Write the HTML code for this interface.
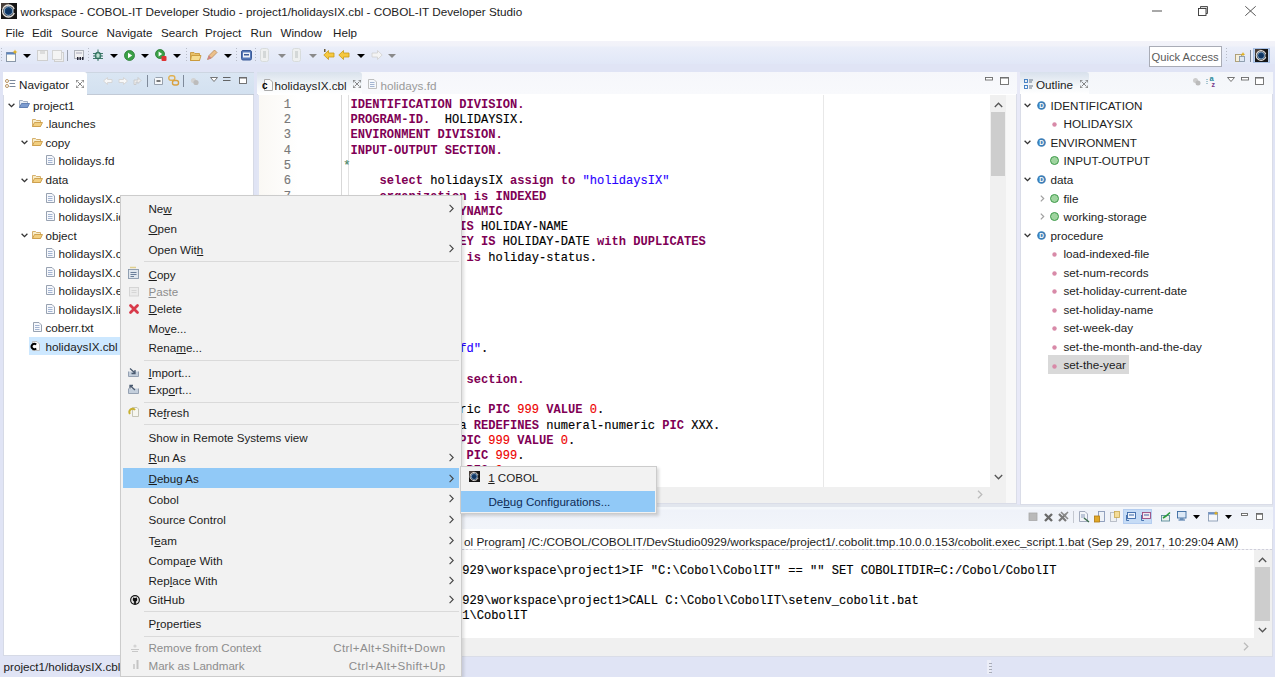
<!DOCTYPE html><html><head><meta charset="utf-8"><style>
*{margin:0;padding:0;box-sizing:border-box}
html,body{width:1275px;height:677px;overflow:hidden;background:#e0e4f5;position:relative;font-family:"Liberation Sans",sans-serif}
.t{position:absolute;white-space:pre;line-height:14px;font-family:"Liberation Sans",sans-serif}
.r{position:absolute}
.m{font-family:"Liberation Mono",monospace;font-size:12.08px;line-height:15px;position:absolute;white-space:pre;-webkit-text-stroke:0.15px currentColor}
.k{-webkit-text-stroke:0}
.k{color:#7f0055;font-weight:bold}
.s{color:#2a00ff}
.n{color:#e00}
u{text-decoration:underline;text-underline-offset:1px}
svg{position:absolute;overflow:visible}
</style></head><body>
<div class="r" style="left:0px;top:0px;width:1275px;height:24px;background:#fff"></div>
<svg style="left:1px;top:3px" width="16" height="16" viewBox="0 0 16 16"><rect x="0" y="0" width="16" height="16" fill="#151515"/><rect x="0" y="0" width="8" height="6" fill="#6a5a50" opacity="0.6"/><circle cx="7.5" cy="8" r="6" fill="none" stroke="#e8e4e0" stroke-width="1.3"/><circle cx="7.5" cy="8" r="4.4" fill="#16406e" stroke="#bcd8f0" stroke-width="0.9"/><circle cx="7.5" cy="8.6" r="2.6" fill="#0f3460"/><rect x="13" y="6" width="3" height="4" fill="#151515"/></svg>
<div class="t " style="left:20.5px;top:4.63px;color:#1c1c1c;font-size:11.74px;">workspace - COBOL-IT Developer Studio - project1/holidaysIX.cbl - COBOL-IT Developer Studio</div>
<div class="r" style="left:1152px;top:10px;width:10px;height:2px;background:#a8a8a8"></div>
<svg style="left:1198px;top:6px" width="11" height="10" viewBox="0 0 11 10"><path d="M2.5 2V0.5H9.5V7.5H8" fill="#d8d8d8" stroke="#444" stroke-width="0.9"/><rect x="0.5" y="2.5" width="7.5" height="7" fill="#fff" stroke="#333" stroke-width="0.9"/></svg>
<svg style="left:1245px;top:6px" width="11" height="10" viewBox="0 0 11 10"><path d="M0.3 0.3L10.7 9.7M10.7 0.3L0.3 9.7" stroke="#444" stroke-width="0.9"/></svg>
<div class="r" style="left:0px;top:24px;width:1275px;height:17px;background:#fff"></div>
<div class="t " style="left:5.5px;top:26.16px;color:#1c1c1c;font-size:11.65px;">File</div>
<div class="t " style="left:32px;top:26.16px;color:#1c1c1c;font-size:11.65px;">Edit</div>
<div class="t " style="left:61px;top:26.16px;color:#1c1c1c;font-size:11.65px;">Source</div>
<div class="t " style="left:106.5px;top:26.16px;color:#1c1c1c;font-size:11.65px;">Navigate</div>
<div class="t " style="left:161px;top:26.16px;color:#1c1c1c;font-size:11.65px;">Search</div>
<div class="t " style="left:205px;top:26.16px;color:#1c1c1c;font-size:11.65px;">Project</div>
<div class="t " style="left:250.5px;top:26.16px;color:#1c1c1c;font-size:11.65px;">Run</div>
<div class="t " style="left:280.5px;top:26.16px;color:#1c1c1c;font-size:11.65px;">Window</div>
<div class="t " style="left:333px;top:26.16px;color:#1c1c1c;font-size:11.65px;">Help</div>
<div class="r" style="left:0px;top:41px;width:1275px;height:23px;background:linear-gradient(#f3f3f9 0,#f1f2f9 5px,#eaeef9 6px,#e1e7f7)"></div>
<div class="r" style="left:1px;top:48px;width:1px;height:13px;background:repeating-linear-gradient(#b8bcc8 0 1px,transparent 1px 3px)"></div>
<svg style="left:5px;top:49px" width="14" height="14" viewBox="0 0 14 14"><rect x="1.5" y="3.5" width="9" height="9" fill="#fdfdf8" stroke="#8a97a8"/><rect x="1.5" y="3.5" width="9" height="2" fill="#5a84c0"/><path d="M10 0.5L10.8 2.2L12.5 3L10.8 3.8L10 5.5L9.2 3.8L7.5 3L9.2 2.2Z" fill="#e0b020"/></svg>
<svg style="left:23px;top:54px" width="8" height="4" viewBox="0 0 8 4"><path d="M0 0H8L4 4Z" fill="#000"/></svg>
<svg style="left:36px;top:49px" width="13" height="13" viewBox="0 0 13 13"><rect x="1.5" y="1.5" width="10" height="10" fill="#f2f2f2" stroke="#cfcfcf"/><rect x="4" y="2" width="5" height="3" fill="#dcdcdc"/></svg>
<svg style="left:51px;top:49px" width="14" height="14" viewBox="0 0 14 14"><rect x="3.5" y="3.5" width="9" height="9" fill="#efefef" stroke="#cfcfcf"/><rect x="1.5" y="1.5" width="9" height="9" fill="#f4f4f4" stroke="#d4d4d4"/></svg>
<div class="r" style="left:67px;top:50px;width:1px;height:11px;background:#9aa0ad"></div>
<svg style="left:73px;top:49px" width="12" height="12" viewBox="0 0 12 12"><rect x="1.5" y="1.5" width="9" height="8" fill="#f0f0f2" stroke="#b0b4bc"/><path d="M3 4H9" stroke="#aab"/><rect x="4" y="8" width="1.5" height="3" fill="#223"/><rect x="6.5" y="8" width="1.5" height="3" fill="#223"/><rect x="9" y="8" width="1.5" height="3" fill="#223"/></svg>
<div class="r" style="left:88px;top:48px;width:1px;height:13px;background:repeating-linear-gradient(#b8bcc8 0 1px,transparent 1px 3px)"></div>
<svg style="left:92px;top:49px" width="12" height="12" viewBox="0 0 12 12"><ellipse cx="6" cy="6.5" rx="3" ry="3.5" fill="#5a9a86" stroke="#2f6e5c" stroke-width="0.8"/><path d="M1 4.5H11M1 7H11M1 9.5H11M6 0.5V12" stroke="#2f6e5c" stroke-width="0.9"/><ellipse cx="6" cy="6.5" rx="1.6" ry="2.2" fill="#bfe0d2"/></svg>
<svg style="left:110px;top:54px" width="8" height="4" viewBox="0 0 8 4"><path d="M0 0H8L4 4Z" fill="#000"/></svg>
<svg style="left:124px;top:50px" width="11" height="11" viewBox="0 0 11 11"><circle cx="5.5" cy="5.5" r="5" fill="#3aa047" stroke="#267a30" stroke-width="0.8"/><path d="M4 2.8L8.2 5.5L4 8.2Z" fill="#fff"/></svg>
<svg style="left:141px;top:54px" width="8" height="4" viewBox="0 0 8 4"><path d="M0 0H8L4 4Z" fill="#000"/></svg>
<svg style="left:155px;top:49px" width="12" height="12" viewBox="0 0 12 12"><circle cx="5" cy="5" r="4.5" fill="#3aa047" stroke="#267a30" stroke-width="0.8"/><path d="M3.6 2.6L7.2 5L3.6 7.4Z" fill="#fff"/><rect x="6.5" y="7" width="5" height="5" rx="1" fill="#d33"/></svg>
<svg style="left:173px;top:54px" width="8" height="4" viewBox="0 0 8 4"><path d="M0 0H8L4 4Z" fill="#000"/></svg>
<div class="r" style="left:186px;top:48px;width:1px;height:13px;background:repeating-linear-gradient(#b8bcc8 0 1px,transparent 1px 3px)"></div>
<svg style="left:190px;top:50px" width="12" height="12" viewBox="0 0 12 12"><path d="M0.5 2.5H4L5 3.5H9.5V10.5H0.5Z" fill="#e8c068" stroke="#c49030" stroke-width="0.8"/><path d="M1.5 5.5H11L9.5 10.5H0.5Z" fill="#f6dc90" stroke="#c49030" stroke-width="0.8"/></svg>
<svg style="left:206px;top:49px" width="12" height="12" viewBox="0 0 12 12"><path d="M1.5 10.5L3 6.5L8.5 1L11 3.5L5.5 9Z" fill="#ecc08a" stroke="#b88a58" stroke-width="0.8"/><path d="M1.5 10.5L3 6.5L5.5 9Z" fill="#d0808a"/></svg>
<svg style="left:224px;top:54px" width="8" height="4" viewBox="0 0 8 4"><path d="M0 0H8L4 4Z" fill="#000"/></svg>
<div class="r" style="left:236px;top:48px;width:1px;height:13px;background:repeating-linear-gradient(#b8bcc8 0 1px,transparent 1px 3px)"></div>
<svg style="left:241px;top:50px" width="11" height="11" viewBox="0 0 11 11"><rect x="0.5" y="0.5" width="10" height="9.5" rx="1.5" fill="#5478b8" stroke="#3a5a98"/><rect x="2" y="2.5" width="7" height="5" fill="#eef2f8"/><rect x="3" y="4" width="5" height="1.5" fill="#3a5a98"/></svg>
<div class="r" style="left:255px;top:48px;width:1px;height:13px;background:repeating-linear-gradient(#b8bcc8 0 1px,transparent 1px 3px)"></div>
<svg style="left:258px;top:48px" width="13" height="14" viewBox="0 0 13 14"><rect x="2.5" y="0.5" width="8" height="13" rx="2" fill="#eef0f0" stroke="#d8dcdc"/><rect x="5" y="3" width="3" height="7" fill="#d4d8d8"/></svg>
<svg style="left:278px;top:54px" width="8" height="4" viewBox="0 0 8 4"><path d="M0 0H8L4 4Z" fill="#8a8a8a"/></svg>
<svg style="left:290px;top:48px" width="13" height="14" viewBox="0 0 13 14"><rect x="2.5" y="0.5" width="8" height="13" rx="2" fill="#eef0f0" stroke="#d8dcdc"/><rect x="5" y="3" width="3" height="7" fill="#d4d8d8"/></svg>
<svg style="left:309px;top:54px" width="8" height="4" viewBox="0 0 8 4"><path d="M0 0H8L4 4Z" fill="#8a8a8a"/></svg>
<svg style="left:323px;top:49px" width="12" height="12" viewBox="0 0 12 12"><path d="M0.8 6L5.5 1.5V4H11V8H5.5V10.5Z" fill="#f6c840" stroke="#c89a18" stroke-width="0.8"/><rect x="1" y="0" width="1.5" height="3" fill="#6a5a3a"/></svg>
<svg style="left:338px;top:49px" width="12" height="12" viewBox="0 0 12 12"><path d="M0.8 6L5.5 1.5V4H11V8H5.5V10.5Z" fill="#f6c840" stroke="#c89a18" stroke-width="0.8"/></svg>
<svg style="left:357px;top:54px" width="8" height="4" viewBox="0 0 8 4"><path d="M0 0H8L4 4Z" fill="#000"/></svg>
<svg style="left:371px;top:49px" width="12" height="12" viewBox="0 0 12 12"><path d="M11.2 6L6.5 1.5V4H1V8H6.5V10.5Z" fill="#f4f4f4" stroke="#d0d0d0" stroke-width="0.8"/></svg>
<svg style="left:388px;top:54px" width="8" height="4" viewBox="0 0 8 4"><path d="M0 0H8L4 4Z" fill="#8a8a8a"/></svg>
<div class="r" style="left:1149px;top:46px;width:73px;height:21px;background:#fff;border:1px solid #a9acb6"></div>
<div class="t " style="left:1151.5px;top:50.12px;color:#5a5a5a;font-size:11.2px;">Quick Access</div>
<div class="r" style="left:1226px;top:48px;width:1px;height:13px;background:repeating-linear-gradient(#b8bcc8 0 1px,transparent 1px 3px)"></div>
<svg style="left:1235px;top:52px" width="11" height="10" viewBox="0 0 11 10"><rect x="0.5" y="2.5" width="6" height="7" fill="#f6f0dc" stroke="#a99a70" stroke-width="0.9"/><rect x="4.5" y="4.5" width="5" height="5" fill="#dfe8f4" stroke="#8899aa" stroke-width="0.9"/><path d="M8 0L8.7 1.5L10.2 2.2L8.7 2.9L8 4.4L7.3 2.9L5.8 2.2L7.3 1.5Z" fill="#e0b020"/></svg>
<div class="r" style="left:1250px;top:50px;width:1px;height:12px;background:#7a8494"></div>
<div class="r" style="left:1253px;top:48px;width:17px;height:15px;background:#bcd0ec;border:1px solid #a8c0e4"></div>
<svg style="left:1255px;top:49px" width="13" height="13" viewBox="0 0 16 16"><rect x="0" y="0" width="16" height="16" fill="#151515"/><rect x="0" y="0" width="8" height="6" fill="#6a5a50" opacity="0.6"/><circle cx="7.5" cy="8" r="6" fill="none" stroke="#e8e4e0" stroke-width="1.3"/><circle cx="7.5" cy="8" r="4.4" fill="#16406e" stroke="#bcd8f0" stroke-width="0.9"/><circle cx="7.5" cy="8.6" r="2.6" fill="#0f3460"/><rect x="13" y="6" width="3" height="4" fill="#151515"/></svg>
<div class="r" style="left:3px;top:72px;width:251px;height:584px;background:#fff;border:1px solid #d6dae6;border-top:none"></div>
<div class="r" style="left:3px;top:72px;width:251px;height:23px;background:linear-gradient(#dae6f3,#d3e1f0);border-top:1px solid #cdd6e2;border-bottom:1px solid #c2cad6"></div>
<div class="r" style="left:3px;top:72px;width:84px;height:23px;background:#fff;border-top-right-radius:3px"></div>
<svg style="left:5px;top:79px" width="11" height="9" viewBox="0 0 11 9"><circle cx="2" cy="2" r="1.5" fill="none" stroke="#b08850" stroke-width="0.9"/><circle cx="2" cy="7" r="1.5" fill="none" stroke="#b08850" stroke-width="0.9"/><path d="M4.5 1.5H10.5M4.5 4.5H10M4.5 7.5H10.5" stroke="#6b7a90" stroke-width="0.9"/></svg>
<div class="t " style="left:19px;top:78.45px;color:#1c1c1c;font-size:11.7px;">Navigator</div>
<svg style="left:76px;top:80px" width="8" height="8" viewBox="0 0 8 8"><path d="M1.5 1.5L6.5 6.5M6.5 1.5L1.5 6.5" stroke="#6a6a6a" stroke-width="0.8"/><path d="M0.5 0V2.5M0 0.5H2.5M7.5 0V2.5M8 0.5H5.5M0.5 8V5.5M0 7.5H2.5M7.5 8V5.5M8 7.5H5.5" stroke="#6a6a6a" stroke-width="0.8" opacity="0.8"/></svg>
<svg style="left:103px;top:77px" width="10" height="8" viewBox="0 0 10 8"><path d="M0.5 4L4.5 0.5V2.5H9V5.5H4.5V7.5Z" fill="#f8f8f8" stroke="#d4d4d4" stroke-width="0.9"/></svg>
<svg style="left:118px;top:77px" width="10" height="8" viewBox="0 0 10 8"><path d="M9.5 4L5.5 0.5V2.5H1V5.5H5.5V7.5Z" fill="#f8f8f8" stroke="#d4d4d4" stroke-width="0.9"/></svg>
<svg style="left:133px;top:76px" width="9" height="9" viewBox="0 0 9 9"><path d="M1 8.5V4H5V1.5L8 4.5L5 7.5V6H3V8.5Z" fill="#eeeeee" stroke="#c8c8c8" stroke-width="0.9"/></svg>
<div class="r" style="left:147px;top:75px;width:1px;height:12px;background:#7f8a9a"></div>
<svg style="left:154px;top:77px" width="9" height="8" viewBox="0 0 9 8"><path d="M1.5 0.5H8.5V7.5H0.5V1.5" fill="#f6f8fa" stroke="#8d97a5" stroke-width="0.9"/><path d="M2.5 4H6.5" stroke="#222" stroke-width="1.2"/></svg>
<svg style="left:168px;top:75px" width="11" height="11" viewBox="0 0 11 11"><rect x="0.8" y="0.8" width="6" height="4.5" rx="2" fill="none" stroke="#e0b050" stroke-width="1.4"/><rect x="4.5" y="5.5" width="6" height="4.5" rx="2" fill="none" stroke="#d8a040" stroke-width="1.4"/></svg>
<div class="r" style="left:183px;top:75px;width:1px;height:12px;background:#7f8a9a"></div>
<svg style="left:190px;top:77px" width="9" height="9" viewBox="0 0 9 9"><circle cx="3.5" cy="3.5" r="2.6" fill="#d2d2d2"/><circle cx="6" cy="5.5" r="2.6" fill="#bcbcbc"/></svg>
<svg style="left:210px;top:77px" width="8" height="5" viewBox="0 0 8 5"><path d="M0.5 0.5H7.5L4 4.5Z" fill="#fff" stroke="#666" stroke-width="0.9"/></svg>
<svg style="left:223px;top:77px" width="8" height="4" viewBox="0 0 8 4"><path d="M0 0.5H7.5M0 3.5H7.5" stroke="#555" stroke-width="0.9"/></svg>
<svg style="left:239px;top:77px" width="8" height="7" viewBox="0 0 8 7"><rect x="0.5" y="0.5" width="7" height="6" fill="#fff" stroke="#666" stroke-width="0.9"/><rect x="0.5" y="0.5" width="7" height="1" fill="#666"/></svg>
<div class="r" style="left:29px;top:337px;width:95px;height:18px;background:#cde8ff"></div>
<svg style="left:8px;top:103.3px" width="7" height="5" viewBox="0 0 7 5"><path d="M0.6 0.8L3.5 3.7L6.4 0.8" fill="none" stroke="#333" stroke-width="1.3"/></svg>
<svg style="left:19px;top:100.3px" width="11" height="8" viewBox="0 0 11 8"><path d="M0.5 0.5H3.5L4.5 1.5H8.5V7.5H0.5Z" fill="#e6ecf4" stroke="#9aa8bc" stroke-width="0.9"/><path d="M2.5 3.5H10.5L8.5 7.5H0.5Z" fill="#7c9cd0" stroke="#5a7ab0" stroke-width="0.9"/></svg>
<div class="t " style="left:33px;top:98.75px;color:#1c1c1c;font-size:11.7px;">project1</div>
<svg style="left:31.5px;top:119.35px" width="11" height="8" viewBox="0 0 11 8"><path d="M0.5 0.5H3.5L4.5 1.5H8.5V7.5H0.5Z" fill="#f8ecc8" stroke="#d0a860" stroke-width="0.9"/><path d="M2.5 3.5H10.5L8.5 7.5H0.5Z" fill="#f2cf80" stroke="#cc9c48" stroke-width="0.9"/></svg>
<div class="t " style="left:45.5px;top:117.30px;color:#1c1c1c;font-size:11.7px;">.launches</div>
<svg style="left:21px;top:140.4px" width="7" height="5" viewBox="0 0 7 5"><path d="M0.6 0.8L3.5 3.7L6.4 0.8" fill="none" stroke="#333" stroke-width="1.3"/></svg>
<svg style="left:31.5px;top:137.9px" width="11" height="8" viewBox="0 0 11 8"><path d="M0.5 0.5H3.5L4.5 1.5H8.5V7.5H0.5Z" fill="#f8ecc8" stroke="#d0a860" stroke-width="0.9"/><path d="M2.5 3.5H10.5L8.5 7.5H0.5Z" fill="#f2cf80" stroke="#cc9c48" stroke-width="0.9"/></svg>
<div class="t " style="left:45.5px;top:135.85px;color:#1c1c1c;font-size:11.7px;">copy</div>
<svg style="left:46px;top:155.45px" width="9" height="10" viewBox="0 0 9 10"><path d="M0.5 0.5H6L8.5 3V9.5H0.5Z" fill="#f6f8fc" stroke="#8c97a8" stroke-width="0.9"/><path d="M2 3.5H6.5M2 5.5H6.5M2 7.5H6.5" stroke="#9aabcc" stroke-width="0.9"/></svg>
<div class="t " style="left:58.5px;top:154.40px;color:#1c1c1c;font-size:11.7px;">holidays.fd</div>
<svg style="left:21px;top:177.5px" width="7" height="5" viewBox="0 0 7 5"><path d="M0.6 0.8L3.5 3.7L6.4 0.8" fill="none" stroke="#333" stroke-width="1.3"/></svg>
<svg style="left:31.5px;top:175.0px" width="11" height="8" viewBox="0 0 11 8"><path d="M0.5 0.5H3.5L4.5 1.5H8.5V7.5H0.5Z" fill="#f8ecc8" stroke="#d0a860" stroke-width="0.9"/><path d="M2.5 3.5H10.5L8.5 7.5H0.5Z" fill="#f2cf80" stroke="#cc9c48" stroke-width="0.9"/></svg>
<div class="t " style="left:45.5px;top:172.95px;color:#1c1c1c;font-size:11.7px;">data</div>
<svg style="left:46px;top:192.55px" width="9" height="10" viewBox="0 0 9 10"><path d="M0.5 0.5H6L8.5 3V9.5H0.5Z" fill="#f6f8fc" stroke="#8c97a8" stroke-width="0.9"/><path d="M2 3.5H6.5M2 5.5H6.5M2 7.5H6.5" stroke="#9aabcc" stroke-width="0.9"/></svg>
<div class="t " style="left:58.5px;top:191.50px;color:#1c1c1c;font-size:11.7px;">holidaysIX.dat</div>
<svg style="left:46px;top:211.10000000000002px" width="9" height="10" viewBox="0 0 9 10"><path d="M0.5 0.5H6L8.5 3V9.5H0.5Z" fill="#f6f8fc" stroke="#8c97a8" stroke-width="0.9"/><path d="M2 3.5H6.5M2 5.5H6.5M2 7.5H6.5" stroke="#9aabcc" stroke-width="0.9"/></svg>
<div class="t " style="left:58.5px;top:210.05px;color:#1c1c1c;font-size:11.7px;">holidaysIX.idx</div>
<svg style="left:21px;top:233.14999999999998px" width="7" height="5" viewBox="0 0 7 5"><path d="M0.6 0.8L3.5 3.7L6.4 0.8" fill="none" stroke="#333" stroke-width="1.3"/></svg>
<svg style="left:31.5px;top:230.64999999999998px" width="11" height="8" viewBox="0 0 11 8"><path d="M0.5 0.5H3.5L4.5 1.5H8.5V7.5H0.5Z" fill="#f8ecc8" stroke="#d0a860" stroke-width="0.9"/><path d="M2.5 3.5H10.5L8.5 7.5H0.5Z" fill="#f2cf80" stroke="#cc9c48" stroke-width="0.9"/></svg>
<div class="t " style="left:45.5px;top:228.60px;color:#1c1c1c;font-size:11.7px;">object</div>
<svg style="left:46px;top:248.2px" width="9" height="10" viewBox="0 0 9 10"><path d="M0.5 0.5H6L8.5 3V9.5H0.5Z" fill="#f6f8fc" stroke="#8c97a8" stroke-width="0.9"/><path d="M2 3.5H6.5M2 5.5H6.5M2 7.5H6.5" stroke="#9aabcc" stroke-width="0.9"/></svg>
<div class="t " style="left:58.5px;top:247.15px;color:#1c1c1c;font-size:11.7px;">holidaysIX.c1</div>
<svg style="left:46px;top:266.75px" width="9" height="10" viewBox="0 0 9 10"><path d="M0.5 0.5H6L8.5 3V9.5H0.5Z" fill="#f6f8fc" stroke="#8c97a8" stroke-width="0.9"/><path d="M2 3.5H6.5M2 5.5H6.5M2 7.5H6.5" stroke="#9aabcc" stroke-width="0.9"/></svg>
<div class="t " style="left:58.5px;top:265.70px;color:#1c1c1c;font-size:11.7px;">holidaysIX.c2</div>
<svg style="left:46px;top:285.3px" width="9" height="10" viewBox="0 0 9 10"><path d="M0.5 0.5H6L8.5 3V9.5H0.5Z" fill="#f6f8fc" stroke="#8c97a8" stroke-width="0.9"/><path d="M2 3.5H6.5M2 5.5H6.5M2 7.5H6.5" stroke="#9aabcc" stroke-width="0.9"/></svg>
<div class="t " style="left:58.5px;top:284.25px;color:#1c1c1c;font-size:11.7px;">holidaysIX.exe</div>
<svg style="left:46px;top:303.85px" width="9" height="10" viewBox="0 0 9 10"><path d="M0.5 0.5H6L8.5 3V9.5H0.5Z" fill="#f6f8fc" stroke="#8c97a8" stroke-width="0.9"/><path d="M2 3.5H6.5M2 5.5H6.5M2 7.5H6.5" stroke="#9aabcc" stroke-width="0.9"/></svg>
<div class="t " style="left:58.5px;top:302.80px;color:#1c1c1c;font-size:11.7px;">holidaysIX.lis</div>
<svg style="left:33px;top:322.40000000000003px" width="9" height="10" viewBox="0 0 9 10"><path d="M0.5 0.5H6L8.5 3V9.5H0.5Z" fill="#f6f8fc" stroke="#8c97a8" stroke-width="0.9"/><path d="M2 3.5H6.5M2 5.5H6.5M2 7.5H6.5" stroke="#9aabcc" stroke-width="0.9"/></svg>
<div class="t " style="left:45.5px;top:321.35px;color:#1c1c1c;font-size:11.7px;">coberr.txt</div>
<svg style="left:30px;top:340.95px" width="10" height="10" viewBox="0 0 10 10"><path d="M2.5 0.5H7L9.5 3V9.5H2.5Z" fill="#fbfbfb" stroke="#b8b8b8" stroke-width="0.9"/><path d="M6.2 3.6A2.8 2.6 0 1 0 6.2 7.4" fill="none" stroke="#000" stroke-width="2"/></svg>
<div class="t " style="left:45.5px;top:339.90px;color:#1c1c1c;font-size:11.7px;">holidaysIX.cbl</div>
<div class="r" style="left:257px;top:72px;width:760px;height:432px;background:#fff;border:1px solid #dadde8;border-top:none"></div>
<div class="r" style="left:257px;top:72px;width:760px;height:22px;background:linear-gradient(#f6f7fb,#f8f9fc)"></div>
<div class="r" style="left:257px;top:72px;width:105px;height:22px;background:linear-gradient(#d9e2ec,#f4f7fa 65%,#fff);border-top-right-radius:3px"></div>
<svg style="left:262px;top:79px" width="12" height="12" viewBox="0 0 12 12"><path d="M2.5 0.5H8L10.5 3V11.5H2.5Z" fill="#fbfbfb" stroke="#aaa"/><text x="0" y="10" font-family="Liberation Sans" font-weight="bold" font-size="10" fill="#000">c</text></svg>
<div class="t " style="left:274.5px;top:78.95px;color:#1c1c1c;font-size:11.7px;">holidaysIX.cbl</div>
<svg style="left:353px;top:80px" width="8" height="8" viewBox="0 0 8 8"><path d="M1.5 1.5L6.5 6.5M6.5 1.5L1.5 6.5" stroke="#6a6a6a" stroke-width="0.8"/><path d="M0.5 0V2.5M0 0.5H2.5M7.5 0V2.5M8 0.5H5.5M0.5 8V5.5M0 7.5H2.5M7.5 8V5.5M8 7.5H5.5" stroke="#6a6a6a" stroke-width="0.8" opacity="0.8"/></svg>
<svg style="left:368px;top:79px" width="9" height="10" viewBox="0 0 9 10"><path d="M0.5 0.5H6L8.5 3V9.5H0.5Z" fill="#f6f8fc" stroke="#b8b8b8" stroke-width="0.9"/><path d="M2 3.5H6.5M2 5.5H6.5M2 7.5H6.5" stroke="#9aabcc" stroke-width="0.9"/></svg>
<div class="t " style="left:380.5px;top:78.95px;color:#9a9a9a;font-size:11.7px;">holidays.fd</div>
<svg style="left:985px;top:77px" width="8" height="4" viewBox="0 0 8 4"><rect x="0.5" y="0.5" width="7" height="2.5" fill="#fff" stroke="#6a6a6a" stroke-width="0.9"/></svg>
<svg style="left:1000px;top:77px" width="9" height="8" viewBox="0 0 9 8"><rect x="0.5" y="0.5" width="8" height="7" fill="#fff" stroke="#6a6a6a" stroke-width="0.9"/><rect x="0.5" y="0.5" width="8" height="1" fill="#6a6a6a"/></svg>
<div class="r" style="left:258px;top:95px;width:40px;height:392px;background:linear-gradient(90deg,#faf8f4,#fdfcfa 60%,#fff)"></div>
<div class="r" style="left:257px;top:95px;width:2px;height:392px;background:#e2e6f4"></div>
<div class="r" style="left:341px;top:95px;width:1px;height:392px;background:#d8d8d8"></div>
<div class="r" style="left:348px;top:95px;width:1px;height:392px;background:#e2e2e2"></div>
<div class="r" style="left:823px;top:95px;width:1px;height:392px;background:#e8e8e8"></div>
<div class="m" style="left:270px;top:97.90px;width:21px;text-align:right;color:#787878">1</div>
<div class="m" style="left:270px;top:113.17px;width:21px;text-align:right;color:#787878">2</div>
<div class="m" style="left:270px;top:128.44px;width:21px;text-align:right;color:#787878">3</div>
<div class="m" style="left:270px;top:143.71px;width:21px;text-align:right;color:#787878">4</div>
<div class="m" style="left:270px;top:158.98px;width:21px;text-align:right;color:#787878">5</div>
<div class="m" style="left:270px;top:174.25px;width:21px;text-align:right;color:#787878">6</div>
<div class="m" style="left:270px;top:189.52px;width:21px;text-align:right;color:#787878">7</div>
<div class="m" style="left:350.6px;top:97.90px;color:#000"><span class="k">IDENTIFICATION DIVISION.</span></div>
<div class="m" style="left:350.6px;top:113.17px;color:#000"><span class="k">PROGRAM-ID.</span>  HOLIDAYSIX.</div>
<div class="m" style="left:350.6px;top:128.44px;color:#000"><span class="k">ENVIRONMENT DIVISION.</span></div>
<div class="m" style="left:350.6px;top:143.71px;color:#000"><span class="k">INPUT-OUTPUT SECTION.</span></div>
<div class="m" style="left:350.6px;top:174.25px;color:#000">    <span class="k">select</span> holidaysIX <span class="k">assign to</span> <span class="s">"holidaysIX"</span></div>
<div class="m" style="left:350.6px;top:189.52px;color:#000">    <span class="k">organization is INDEXED</span></div>
<div class="m" style="left:350.6px;top:204.79px;color:#000">    <span class="k">access is DYNAMIC</span></div>
<div class="m" style="left:350.6px;top:220.06px;color:#000">    <span class="k">record key IS</span> HOLIDAY-NAME</div>
<div class="m" style="left:350.6px;top:235.33px;color:#000">    <span class="k">alternate KEY IS</span> HOLIDAY-DATE <span class="k">with DUPLICATES</span></div>
<div class="m" style="left:350.6px;top:250.60px;color:#000">    <span class="k">file status is</span> holiday-status.</div>
<div class="m" style="left:350.6px;top:342.22px;color:#000">    <span class="k">copy</span> <span class="s">"holy.fd"</span>.</div>
<div class="m" style="left:350.6px;top:372.76px;color:#000">    <span class="k">working-sto section.</span></div>
<div class="m" style="left:350.6px;top:403.30px;color:#000">    01 numeral-ric <span class="k">PIC</span> <span class="n">999</span> <span class="k">VALUE</span> <span class="n">0</span>.</div>
<div class="m" style="left:350.6px;top:418.57px;color:#000">    01 numeral-a <span class="k">REDEFINES</span> numeral-numeric <span class="k">PIC</span> XXX.</div>
<div class="m" style="left:350.6px;top:433.84px;color:#000">    01 numeral-<span class="k">PIC</span> <span class="n">999</span> <span class="k">VALUE</span> <span class="n">0</span>.</div>
<div class="m" style="left:350.6px;top:449.11px;color:#000">    01 numeral- <span class="k">PIC</span> <span class="n">999</span>.</div>
<div class="m" style="left:350.6px;top:464.38px;color:#000">    01 numeral- <span class="k">PIC</span> <span class="n">9</span>.</div>
<div class="m" style="left:343.35px;top:158.98px;color:#3f7f5f">*</div>
<div class="r" style="left:990px;top:95px;width:16px;height:392px;background:#f0f0f0"></div>
<svg style="left:994px;top:102px" width="9" height="6" viewBox="0 0 9 6"><path d="M0.8 5L4.5 1.2L8.2 5" fill="none" stroke="#555" stroke-width="1.3"/></svg>
<div class="r" style="left:991px;top:112px;width:14px;height:64px;background:#cdcdcd"></div>
<svg style="left:994px;top:474px" width="9" height="6" viewBox="0 0 9 6"><path d="M0.8 1L4.5 4.8L8.2 1" fill="none" stroke="#555" stroke-width="1.3"/></svg>
<div class="r" style="left:258px;top:487px;width:748px;height:16px;background:#f0f0f0"></div>
<svg style="left:977px;top:490px" width="6" height="9" viewBox="0 0 6 9"><path d="M1 0.8L4.8 4.5L1 8.2" fill="none" stroke="#bbb" stroke-width="1.3"/></svg>
<div class="r" style="left:1006px;top:95px;width:10px;height:408px;background:#f8f8f8"></div>
<div class="r" style="left:1017px;top:72px;width:3px;height:432px;background:#e8e9f7"></div>
<div class="r" style="left:1020px;top:72px;width:253px;height:433px;background:#fff;border:1px solid #dadde8;border-top:none"></div>
<div class="r" style="left:1020px;top:72px;width:253px;height:22px;background:linear-gradient(#f4f6fa,#f6f8fb)"></div>
<div class="r" style="left:1020px;top:72px;width:69px;height:22px;background:linear-gradient(#d8e1ec,#f4f7fa 65%,#fff);border-top-right-radius:3px"></div>
<svg style="left:1024px;top:79px" width="9" height="10" viewBox="0 0 9 10"><rect x="0.5" y="0.5" width="3" height="3" fill="none" stroke="#3a7ac0" stroke-width="0.9"/><rect x="0.5" y="6.5" width="3" height="3" fill="none" stroke="#3a7ac0" stroke-width="0.9"/><path d="M5 1H9M5 3H8M5 7H9M5 9H8" stroke="#5a6a7a" stroke-width="0.9"/></svg>
<div class="t " style="left:1036px;top:78.45px;color:#1c1c1c;font-size:11.7px;">Outline</div>
<svg style="left:1080px;top:80px" width="8" height="8" viewBox="0 0 8 8"><path d="M1.5 1.5L6.5 6.5M6.5 1.5L1.5 6.5" stroke="#6a6a6a" stroke-width="0.8"/><path d="M0.5 0V2.5M0 0.5H2.5M7.5 0V2.5M8 0.5H5.5M0.5 8V5.5M0 7.5H2.5M7.5 8V5.5M8 7.5H5.5" stroke="#6a6a6a" stroke-width="0.8" opacity="0.8"/></svg>
<svg style="left:1192px;top:77px" width="9" height="9" viewBox="0 0 9 9"><circle cx="3.5" cy="3.5" r="2.5" fill="#ccc"/><circle cx="6" cy="6" r="2.5" fill="#bbb"/></svg>
<svg style="left:1206px;top:75px" width="12" height="12" viewBox="0 0 12 12"><path d="M1 4V10" stroke="#4a8aa0" stroke-width="0.9" stroke-dasharray="1 1"/><text x="3.5" y="6" font-family="Liberation Sans" font-size="7.5" font-weight="bold" fill="#2a8a9a">a</text><text x="5.5" y="11.5" font-family="Liberation Sans" font-size="7" font-weight="bold" fill="#7a3a8a">z</text></svg>
<svg style="left:1227px;top:77px" width="8" height="5" viewBox="0 0 8 5"><path d="M0.5 0.5H7.5L4 4.5Z" fill="#fff" stroke="#666" stroke-width="0.9"/></svg>
<svg style="left:1241px;top:77px" width="8" height="4" viewBox="0 0 8 4"><rect x="0.5" y="0.5" width="7" height="2.5" fill="#fff" stroke="#6a6a6a" stroke-width="0.9"/></svg>
<svg style="left:1255px;top:77px" width="9" height="8" viewBox="0 0 9 8"><rect x="0.5" y="0.5" width="8" height="7" fill="#fff" stroke="#6a6a6a" stroke-width="0.9"/><rect x="0.5" y="0.5" width="8" height="1" fill="#6a6a6a"/></svg>
<div class="r" style="left:1048px;top:355px;width:81px;height:19px;background:#d9d9d9"></div>
<svg style="left:1024px;top:102.8px" width="7" height="5" viewBox="0 0 7 5"><path d="M0.6 0.8L3.5 3.7L6.4 0.8" fill="none" stroke="#333" stroke-width="1.3"/></svg>
<svg style="left:1037px;top:100.8px" width="9" height="9" viewBox="0 0 9 9"><circle cx="4.5" cy="4.5" r="4.3" fill="#3d7fb8"/><text x="2.3" y="7" font-family="Liberation Sans" font-size="6.5" font-weight="bold" fill="#fff">D</text></svg>
<div class="t " style="left:1050.5px;top:98.75px;color:#1c1c1c;font-size:11.7px;">IDENTIFICATION</div>
<svg style="left:1052px;top:122.35px" width="5" height="5" viewBox="0 0 5 5"><circle cx="2.5" cy="2.5" r="2.2" fill="#d88aa8"/></svg>
<div class="t " style="left:1063.5px;top:117.30px;color:#1c1c1c;font-size:11.7px;">HOLIDAYSIX</div>
<svg style="left:1024px;top:139.9px" width="7" height="5" viewBox="0 0 7 5"><path d="M0.6 0.8L3.5 3.7L6.4 0.8" fill="none" stroke="#333" stroke-width="1.3"/></svg>
<svg style="left:1037px;top:137.9px" width="9" height="9" viewBox="0 0 9 9"><circle cx="4.5" cy="4.5" r="4.3" fill="#3d7fb8"/><text x="2.3" y="7" font-family="Liberation Sans" font-size="6.5" font-weight="bold" fill="#fff">D</text></svg>
<div class="t " style="left:1050.5px;top:135.85px;color:#1c1c1c;font-size:11.7px;">ENVIRONMENT</div>
<svg style="left:1050px;top:156.45px" width="9" height="9" viewBox="0 0 9 9"><circle cx="4.5" cy="4.5" r="4" fill="#9fd49f" stroke="#3e9a4a" stroke-width="1"/></svg>
<div class="t " style="left:1063.5px;top:154.40px;color:#1c1c1c;font-size:11.7px;">INPUT-OUTPUT</div>
<svg style="left:1024px;top:177.0px" width="7" height="5" viewBox="0 0 7 5"><path d="M0.6 0.8L3.5 3.7L6.4 0.8" fill="none" stroke="#333" stroke-width="1.3"/></svg>
<svg style="left:1037px;top:175.0px" width="9" height="9" viewBox="0 0 9 9"><circle cx="4.5" cy="4.5" r="4.3" fill="#3d7fb8"/><text x="2.3" y="7" font-family="Liberation Sans" font-size="6.5" font-weight="bold" fill="#fff">D</text></svg>
<div class="t " style="left:1050.5px;top:172.95px;color:#1c1c1c;font-size:11.7px;">data</div>
<svg style="left:1040px;top:194.55px" width="5" height="7" viewBox="0 0 5 7"><path d="M0.8 0.6L3.7 3.5L0.8 6.4" fill="none" stroke="#a0a0a0" stroke-width="1.2"/></svg>
<svg style="left:1050px;top:193.55px" width="9" height="9" viewBox="0 0 9 9"><circle cx="4.5" cy="4.5" r="4" fill="#9fd49f" stroke="#3e9a4a" stroke-width="1"/></svg>
<div class="t " style="left:1063.5px;top:191.50px;color:#1c1c1c;font-size:11.7px;">file</div>
<svg style="left:1040px;top:213.10000000000002px" width="5" height="7" viewBox="0 0 5 7"><path d="M0.8 0.6L3.7 3.5L0.8 6.4" fill="none" stroke="#a0a0a0" stroke-width="1.2"/></svg>
<svg style="left:1050px;top:212.10000000000002px" width="9" height="9" viewBox="0 0 9 9"><circle cx="4.5" cy="4.5" r="4" fill="#9fd49f" stroke="#3e9a4a" stroke-width="1"/></svg>
<div class="t " style="left:1063.5px;top:210.05px;color:#1c1c1c;font-size:11.7px;">working-storage</div>
<svg style="left:1024px;top:232.64999999999998px" width="7" height="5" viewBox="0 0 7 5"><path d="M0.6 0.8L3.5 3.7L6.4 0.8" fill="none" stroke="#333" stroke-width="1.3"/></svg>
<svg style="left:1037px;top:230.64999999999998px" width="9" height="9" viewBox="0 0 9 9"><circle cx="4.5" cy="4.5" r="4.3" fill="#3d7fb8"/><text x="2.3" y="7" font-family="Liberation Sans" font-size="6.5" font-weight="bold" fill="#fff">D</text></svg>
<div class="t " style="left:1050.5px;top:228.60px;color:#1c1c1c;font-size:11.7px;">procedure</div>
<svg style="left:1052px;top:252.2px" width="5" height="5" viewBox="0 0 5 5"><circle cx="2.5" cy="2.5" r="2.2" fill="#d88aa8"/></svg>
<div class="t " style="left:1063.5px;top:247.15px;color:#1c1c1c;font-size:11.7px;">load-indexed-file</div>
<svg style="left:1052px;top:270.75px" width="5" height="5" viewBox="0 0 5 5"><circle cx="2.5" cy="2.5" r="2.2" fill="#d88aa8"/></svg>
<div class="t " style="left:1063.5px;top:265.70px;color:#1c1c1c;font-size:11.7px;">set-num-records</div>
<svg style="left:1052px;top:289.3px" width="5" height="5" viewBox="0 0 5 5"><circle cx="2.5" cy="2.5" r="2.2" fill="#d88aa8"/></svg>
<div class="t " style="left:1063.5px;top:284.25px;color:#1c1c1c;font-size:11.7px;">set-holiday-current-date</div>
<svg style="left:1052px;top:307.85px" width="5" height="5" viewBox="0 0 5 5"><circle cx="2.5" cy="2.5" r="2.2" fill="#d88aa8"/></svg>
<div class="t " style="left:1063.5px;top:302.80px;color:#1c1c1c;font-size:11.7px;">set-holiday-name</div>
<svg style="left:1052px;top:326.40000000000003px" width="5" height="5" viewBox="0 0 5 5"><circle cx="2.5" cy="2.5" r="2.2" fill="#d88aa8"/></svg>
<div class="t " style="left:1063.5px;top:321.35px;color:#1c1c1c;font-size:11.7px;">set-week-day</div>
<svg style="left:1052px;top:344.95px" width="5" height="5" viewBox="0 0 5 5"><circle cx="2.5" cy="2.5" r="2.2" fill="#d88aa8"/></svg>
<div class="t " style="left:1063.5px;top:339.90px;color:#1c1c1c;font-size:11.7px;">set-the-month-and-the-day</div>
<svg style="left:1052px;top:363.5px" width="5" height="5" viewBox="0 0 5 5"><circle cx="2.5" cy="2.5" r="2.2" fill="#d88aa8"/></svg>
<div class="t " style="left:1063.5px;top:358.45px;color:#1c1c1c;font-size:11.7px;">set-the-year</div>
<div class="r" style="left:257px;top:507px;width:1016px;height:150px;background:#fff;border:1px solid #dadde8;border-top:none"></div>
<div class="r" style="left:257px;top:507px;width:1016px;height:22px;background:linear-gradient(#f4f7fb 0,#f4f7fb 2px,#eff2f9 3px,#f2f5fa)"></div>
<div class="r" style="left:257px;top:504px;width:760px;height:3px;background:#e2e6ee"></div>
<div class="r" style="left:1017px;top:505px;width:256px;height:2px;background:#e2e6ee"></div>
<svg style="left:1029px;top:513px" width="9" height="9" viewBox="0 0 9 9"><rect x="0" y="0" width="8" height="7.5" fill="#b9b9b9" stroke="#a8a8a8" stroke-width="0.8"/></svg>
<svg style="left:1044px;top:513px" width="9" height="9" viewBox="0 0 9 9"><path d="M1 1L8 8M8 1L1 8" stroke="#6a6a6a" stroke-width="2.4"/></svg>
<svg style="left:1058px;top:511px" width="11" height="11" viewBox="0 0 11 11"><path d="M1 3L8 10M8 3L1 10" stroke="#7a7a7a" stroke-width="2.2"/><path d="M3 1L10 8M10 1L6 5" stroke="#8a8a8a" stroke-width="1.6"/></svg>
<div class="r" style="left:1073px;top:511px;width:1px;height:12px;background:#c4c8d0"></div>
<svg style="left:1079px;top:511px" width="11" height="12" viewBox="0 0 11 12"><path d="M0.5 0.5H6L8.5 3V10.5H0.5Z" fill="#f2f4f8" stroke="#98a2b4" stroke-width="0.9"/><path d="M2 4H6M2 6H6" stroke="#8899b8"/><path d="M5 7L10 11" stroke="#3a6a4a" stroke-width="1.5"/></svg>
<svg style="left:1094px;top:511px" width="11" height="12" viewBox="0 0 11 12"><rect x="4.5" y="0.5" width="6" height="10" fill="#eef2f8" stroke="#8899b8" stroke-width="0.9"/><rect x="0.5" y="5" width="5" height="6" fill="#e0a828" stroke="#b07810" stroke-width="0.8"/></svg>
<svg style="left:1110px;top:511px" width="10" height="12" viewBox="0 0 10 12"><rect x="0.5" y="1.5" width="6" height="9" fill="#eef0f2" stroke="#b4bac4" stroke-width="0.9"/><rect x="4.5" y="0.5" width="5" height="6" fill="#f4dc98" stroke="#c8a850" stroke-width="0.8"/></svg>
<div class="r" style="left:1123px;top:509px;width:29px;height:15px;background:#c6dcf6;border:1px solid #b4cdf0"></div>
<svg style="left:1126px;top:512px" width="10" height="10" viewBox="0 0 10 10"><rect x="1.5" y="0.5" width="8" height="6" fill="#eef4fc" stroke="#3a68a8" stroke-width="0.9"/><path d="M3 3H8" stroke="#3a68a8"/><path d="M0.5 3V8.5H3" fill="none" stroke="#3a68a8" stroke-width="0.9"/></svg>
<svg style="left:1141px;top:512px" width="10" height="10" viewBox="0 0 10 10"><rect x="1.5" y="0.5" width="8" height="6" fill="#f6e8f0" stroke="#9a4a80" stroke-width="0.9"/><path d="M3 3H8" stroke="#3a68a8"/><path d="M0.5 3V8.5H3" fill="none" stroke="#3a68a8" stroke-width="0.9"/></svg>
<svg style="left:1161px;top:512px" width="10" height="10" viewBox="0 0 10 10"><rect x="0.5" y="3.5" width="8" height="5.5" fill="#e8f0ec" stroke="#5a8a9a" stroke-width="0.9"/><path d="M2 6L5 4L9 0.5" stroke="#2a9a3a" stroke-width="1.6" fill="none"/></svg>
<svg style="left:1177px;top:511px" width="10" height="10" viewBox="0 0 10 10"><rect x="0.5" y="0.5" width="8.5" height="6.5" fill="#dce8f6" stroke="#3a6aa0" stroke-width="0.9"/><rect x="3" y="7.5" width="3.5" height="1" fill="#3a6aa0"/><rect x="1.5" y="8.5" width="6.5" height="1" fill="#3a6aa0"/></svg>
<svg style="left:1193px;top:515px" width="7" height="4" viewBox="0 0 7 4"><path d="M0 0H7L3.5 4Z" fill="#000"/></svg>
<svg style="left:1208px;top:511px" width="11" height="11" viewBox="0 0 11 11"><rect x="0.5" y="1.5" width="9" height="8.5" fill="#f6f8fc" stroke="#8a9cb4" stroke-width="0.9"/><rect x="0.5" y="1.5" width="9" height="2" fill="#6a90c8"/><path d="M8 0L8.7 1.5L10.2 2.2L8.7 2.9L8 4.4L7.3 2.9L5.8 2.2L7.3 1.5Z" fill="#e0b020"/></svg>
<svg style="left:1225px;top:515px" width="7" height="4" viewBox="0 0 7 4"><path d="M0 0H7L3.5 4Z" fill="#000"/></svg>
<svg style="left:1241px;top:513px" width="7" height="3" viewBox="0 0 7 3"><rect x="0.5" y="0.5" width="6" height="2" fill="#fff" stroke="#666" stroke-width="0.9"/></svg>
<svg style="left:1256px;top:513px" width="7" height="7" viewBox="0 0 7 7"><rect x="0.5" y="0.5" width="6" height="6" fill="#fff" stroke="#666" stroke-width="0.9"/><rect x="0.5" y="0.5" width="6" height="1.2" fill="#666"/></svg>
<div class="r" style="left:258px;top:549px;width:1014px;height:1px;background:repeating-linear-gradient(90deg,#d0d0da 0 2px,#ececf2 2px 4px)"></div>
<div class="t " style="left:464px;top:534.51px;color:#1c1c1c;font-size:11.8px;">ol Program] /C:/COBOL/COBOLIT/DevStudio0929/workspace/project1/.cobolit.tmp.10.0.0.153/cobolit.exec_script.1.bat (Sep 29, 2017, 10:29:04 AM)</div>
<div class="m" style="left:462.2px;top:563.70px;color:#000">929\workspace\project1&gt;IF "C:\Cobol\CobolIT" == "" SET COBOLITDIR=C:/Cobol/CobolIT</div>
<div class="m" style="left:462.2px;top:594.10px;color:#000">929\workspace\project1&gt;CALL C:\Cobol\CobolIT\setenv_cobolit.bat</div>
<div class="m" style="left:462.2px;top:609.30px;color:#000">1\CobolIT</div>
<div class="r" style="left:1254px;top:550px;width:18px;height:88px;background:#f0f0f0"></div>
<svg style="left:1258px;top:557px" width="9" height="6" viewBox="0 0 9 6"><path d="M0.8 5L4.5 1.2L8.2 5" fill="none" stroke="#555" stroke-width="1.3"/></svg>
<div class="r" style="left:1255px;top:567px;width:15px;height:54px;background:#cdcdcd"></div>
<svg style="left:1258px;top:627px" width="9" height="6" viewBox="0 0 9 6"><path d="M0.8 1L4.5 4.8L8.2 1" fill="none" stroke="#555" stroke-width="1.3"/></svg>
<div class="r" style="left:258px;top:638px;width:1014px;height:18px;background:#f0f0f0"></div>
<svg style="left:1243px;top:642px" width="6" height="9" viewBox="0 0 6 9"><path d="M1 0.8L4.8 4.5L1 8.2" fill="none" stroke="#bbb" stroke-width="1.3"/></svg>
<div class="t " style="left:3.5px;top:660.45px;color:#1c1c1c;font-size:11.7px;">project1/holidaysIX.cbl</div>
<div class="r" style="left:987px;top:660px;width:4px;height:14px;background:#eceef8"></div>
<div class="r" style="left:989px;top:663px;width:3px;height:1px;background:#a8acb8"></div>
<div class="r" style="left:989px;top:666px;width:3px;height:1px;background:#a8acb8"></div>
<div class="r" style="left:989px;top:669px;width:3px;height:1px;background:#a8acb8"></div>
<div class="r" style="left:989px;top:672px;width:3px;height:1px;background:#a8acb8"></div>
<div class="r" style="left:122px;top:197px;width:342px;height:482px;background:rgba(0,0,0,0.12);filter:blur(1.5px)"></div>
<div class="r" style="left:120px;top:195px;width:342px;height:482px;background:#f2f2f2;border:1px solid #cccccc"></div>
<div class="r" style="left:123px;top:468px;width:336px;height:20px;background:#91c9f7"></div>
<div class="r" style="left:144px;top:261px;width:315px;height:1px;background:#dadada"></div>
<div class="r" style="left:144px;top:360px;width:315px;height:1px;background:#dadada"></div>
<div class="r" style="left:144px;top:402px;width:315px;height:1px;background:#dadada"></div>
<div class="r" style="left:144px;top:424px;width:315px;height:1px;background:#dadada"></div>
<div class="r" style="left:144px;top:611px;width:315px;height:1px;background:#dadada"></div>
<div class="r" style="left:144px;top:636px;width:315px;height:1px;background:#dadada"></div>
<div class="t " style="left:148.5px;top:202.38px;color:#1c1c1c;font-size:11.6px;">Ne<u>w</u></div>
<svg style="left:449px;top:203.9px" width="5" height="9" viewBox="0 0 5 9"><path d="M0.6 0.8L4.2 4.5L0.6 8.2" fill="none" stroke="#444" stroke-width="1.1"/></svg>
<div class="t " style="left:148.5px;top:222.48px;color:#1c1c1c;font-size:11.6px;"><u>O</u>pen</div>
<div class="t " style="left:148.5px;top:242.58px;color:#1c1c1c;font-size:11.6px;">Open Wit<u>h</u></div>
<svg style="left:449px;top:244.1px" width="5" height="9" viewBox="0 0 5 9"><path d="M0.6 0.8L4.2 4.5L0.6 8.2" fill="none" stroke="#444" stroke-width="1.1"/></svg>
<div class="t " style="left:148.5px;top:267.58px;color:#1c1c1c;font-size:11.6px;"><u>C</u>opy</div>
<div class="t " style="left:148.5px;top:284.58px;color:#8d8d8d;font-size:11.6px;"><u>P</u>aste</div>
<div class="t " style="left:148.5px;top:302.28px;color:#1c1c1c;font-size:11.6px;"><u>D</u>elete</div>
<div class="t " style="left:148.5px;top:322.28px;color:#1c1c1c;font-size:11.6px;">Mo<u>v</u>e...</div>
<div class="t " style="left:148.5px;top:341.48px;color:#1c1c1c;font-size:11.6px;">Rena<u>m</u>e...</div>
<div class="t " style="left:148.5px;top:366.28px;color:#1c1c1c;font-size:11.6px;"><u>I</u>mport...</div>
<div class="t " style="left:148.5px;top:383.28px;color:#1c1c1c;font-size:11.6px;">Exp<u>o</u>rt...</div>
<div class="t " style="left:148.5px;top:406.18px;color:#1c1c1c;font-size:11.6px;">Re<u>f</u>resh</div>
<div class="t " style="left:148.5px;top:430.58px;color:#1c1c1c;font-size:11.6px;">Show in Remote Systems view</div>
<div class="t " style="left:148.5px;top:451.38px;color:#1c1c1c;font-size:11.6px;"><u>R</u>un As</div>
<svg style="left:449px;top:452.9px" width="5" height="9" viewBox="0 0 5 9"><path d="M0.6 0.8L4.2 4.5L0.6 8.2" fill="none" stroke="#444" stroke-width="1.1"/></svg>
<div class="t " style="left:148.5px;top:471.98px;color:#1c1c1c;font-size:11.6px;"><u>D</u>ebug As</div>
<svg style="left:449px;top:473.5px" width="5" height="9" viewBox="0 0 5 9"><path d="M0.6 0.8L4.2 4.5L0.6 8.2" fill="none" stroke="#444" stroke-width="1.1"/></svg>
<div class="t " style="left:148.5px;top:492.58px;color:#1c1c1c;font-size:11.6px;">Cobol</div>
<svg style="left:449px;top:494.1px" width="5" height="9" viewBox="0 0 5 9"><path d="M0.6 0.8L4.2 4.5L0.6 8.2" fill="none" stroke="#444" stroke-width="1.1"/></svg>
<div class="t " style="left:148.5px;top:513.28px;color:#1c1c1c;font-size:11.6px;">Source Control</div>
<svg style="left:449px;top:514.8px" width="5" height="9" viewBox="0 0 5 9"><path d="M0.6 0.8L4.2 4.5L0.6 8.2" fill="none" stroke="#444" stroke-width="1.1"/></svg>
<div class="t " style="left:148.5px;top:533.98px;color:#1c1c1c;font-size:11.6px;">T<u>e</u>am</div>
<svg style="left:449px;top:535.5px" width="5" height="9" viewBox="0 0 5 9"><path d="M0.6 0.8L4.2 4.5L0.6 8.2" fill="none" stroke="#444" stroke-width="1.1"/></svg>
<div class="t " style="left:148.5px;top:553.98px;color:#1c1c1c;font-size:11.6px;">Compa<u>r</u>e With</div>
<svg style="left:449px;top:555.5px" width="5" height="9" viewBox="0 0 5 9"><path d="M0.6 0.8L4.2 4.5L0.6 8.2" fill="none" stroke="#444" stroke-width="1.1"/></svg>
<div class="t " style="left:148.5px;top:574.08px;color:#1c1c1c;font-size:11.6px;">Rep<u>l</u>ace With</div>
<svg style="left:449px;top:575.6px" width="5" height="9" viewBox="0 0 5 9"><path d="M0.6 0.8L4.2 4.5L0.6 8.2" fill="none" stroke="#444" stroke-width="1.1"/></svg>
<div class="t " style="left:148.5px;top:593.28px;color:#1c1c1c;font-size:11.6px;">GitHub</div>
<svg style="left:449px;top:594.8px" width="5" height="9" viewBox="0 0 5 9"><path d="M0.6 0.8L4.2 4.5L0.6 8.2" fill="none" stroke="#444" stroke-width="1.1"/></svg>
<div class="t " style="left:148.5px;top:617.38px;color:#1c1c1c;font-size:11.6px;">P<u>r</u>operties</div>
<div class="t " style="left:148.5px;top:641.28px;color:#8d8d8d;font-size:11.6px;">Remove from Context</div>
<div class="t " style="left:148.5px;top:658.98px;color:#8d8d8d;font-size:11.6px;">Mark as Landmark</div>
<div class="t" style="left:280px;top:641.3px;width:165.5px;text-align:right;color:#8d8d8d;font-size:11.6px;letter-spacing:0.4px">Ctrl+Alt+Shift+Down</div>
<div class="t" style="left:280px;top:659px;width:165.5px;text-align:right;color:#8d8d8d;font-size:11.6px;letter-spacing:0.4px">Ctrl+Alt+Shift+Up</div>
<svg style="left:128px;top:267px" width="11" height="12" viewBox="0 0 11 12"><path d="M2 0.5H8" stroke="#e0d090" stroke-width="1.5"/><rect x="0.5" y="2.5" width="10" height="9" fill="#dfe6ee" stroke="#8898ac" stroke-width="0.9"/><path d="M2.5 5.5H8.5M2.5 7.5H8.5M2.5 9.5H6" stroke="#6a7e9a" stroke-width="1"/></svg>
<svg style="left:129px;top:287px" width="10" height="10" viewBox="0 0 10 10"><rect x="0.5" y="0.5" width="9" height="8.5" fill="#ebebeb" stroke="#d2d2d2" stroke-width="0.9"/><path d="M2.5 3.5H7.5M2.5 5.5H7.5" stroke="#d6d6d6"/></svg>
<svg style="left:129px;top:304px" width="10" height="10" viewBox="0 0 10 10"><path d="M1.5 1.5L8.5 8.5M8.5 1.5L1.5 8.5" stroke="#d83a4a" stroke-width="2.8" stroke-linecap="round"/></svg>
<svg style="left:128px;top:368px" width="11" height="9" viewBox="0 0 11 9"><path d="M0.5 3.5V8.5H10.5V3.5" fill="#c4cfdc" stroke="#8c9aac" stroke-width="0.9"/><path d="M2 0.5L7 5M7 2V5.5H3.5" fill="none" stroke="#4a5a70" stroke-width="1.3"/></svg>
<svg style="left:128px;top:385px" width="11" height="9" viewBox="0 0 11 9"><path d="M0.5 3.5V8.5H10.5V3.5" fill="#c4cfdc" stroke="#8c9aac" stroke-width="0.9"/><path d="M7 5L2 0.5M2 3.5V0.5H5" fill="none" stroke="#4a5a70" stroke-width="1.3"/></svg>
<svg style="left:129px;top:407px" width="10" height="10" viewBox="0 0 10 10"><path d="M3.5 0.5H8L9.5 2V9.5H3.5Z" fill="#f6f6f0" stroke="#c0c0b0" stroke-width="0.9"/><path d="M1 7A3 3 0 0 1 6 3" fill="none" stroke="#c8b030" stroke-width="2"/></svg>
<svg style="left:129.5px;top:595px" width="10" height="10" viewBox="0 0 10 10"><circle cx="5" cy="5" r="4.9" fill="#111"/><circle cx="5" cy="5" r="3.8" fill="#e8e8e8"/><path d="M3 3.6L3.2 2.2L4.2 2.9Q5 2.7 5.8 2.9L6.8 2.2L7 3.6Q7.5 4.4 7.1 5.4Q6.6 6.4 5 6.4Q3.4 6.4 2.9 5.4Q2.5 4.4 3 3.6Z" fill="#111"/><path d="M4.4 6V9M5.6 6V9" stroke="#111" stroke-width="1"/></svg>
<svg style="left:130px;top:644px" width="10" height="8" viewBox="0 0 10 8"><circle cx="5" cy="2" r="1.6" fill="#d4d4d4"/><path d="M1 5.5H9M2 7.5H8" stroke="#c8c8c8" stroke-width="1.2"/></svg>
<svg style="left:132px;top:660px" width="8" height="10" viewBox="0 0 8 10"><rect x="4.5" y="0" width="2" height="9" fill="#c4c4c4"/><rect x="1" y="4" width="2" height="5" fill="#d0d0d0"/></svg>
<div class="r" style="left:462px;top:468px;width:197px;height:48px;background:rgba(0,0,0,0.15);filter:blur(1.5px)"></div>
<div class="r" style="left:460px;top:466px;width:197px;height:48px;background:#f2f2f2;border:1px solid #cccccc"></div>
<div class="r" style="left:461px;top:491px;width:194px;height:21px;background:#91c9f7"></div>
<svg style="left:468.5px;top:471px" width="11" height="11" viewBox="0 0 16 16"><rect x="0" y="0" width="16" height="16" fill="#151515"/><rect x="0" y="0" width="8" height="6" fill="#6a5a50" opacity="0.6"/><circle cx="7.5" cy="8" r="6" fill="none" stroke="#e8e4e0" stroke-width="1.3"/><circle cx="7.5" cy="8" r="4.4" fill="#16406e" stroke="#bcd8f0" stroke-width="0.9"/><circle cx="7.5" cy="8.6" r="2.6" fill="#0f3460"/><rect x="13" y="6" width="3" height="4" fill="#151515"/></svg>
<div class="t " style="left:488.2px;top:470.68px;color:#1c1c1c;font-size:11.6px;"><u>1</u> COBOL</div>
<div class="t " style="left:488.5px;top:494.58px;color:#0f2b55;font-size:11.6px;">De<u>b</u>ug Configurations...</div>
</body></html>
